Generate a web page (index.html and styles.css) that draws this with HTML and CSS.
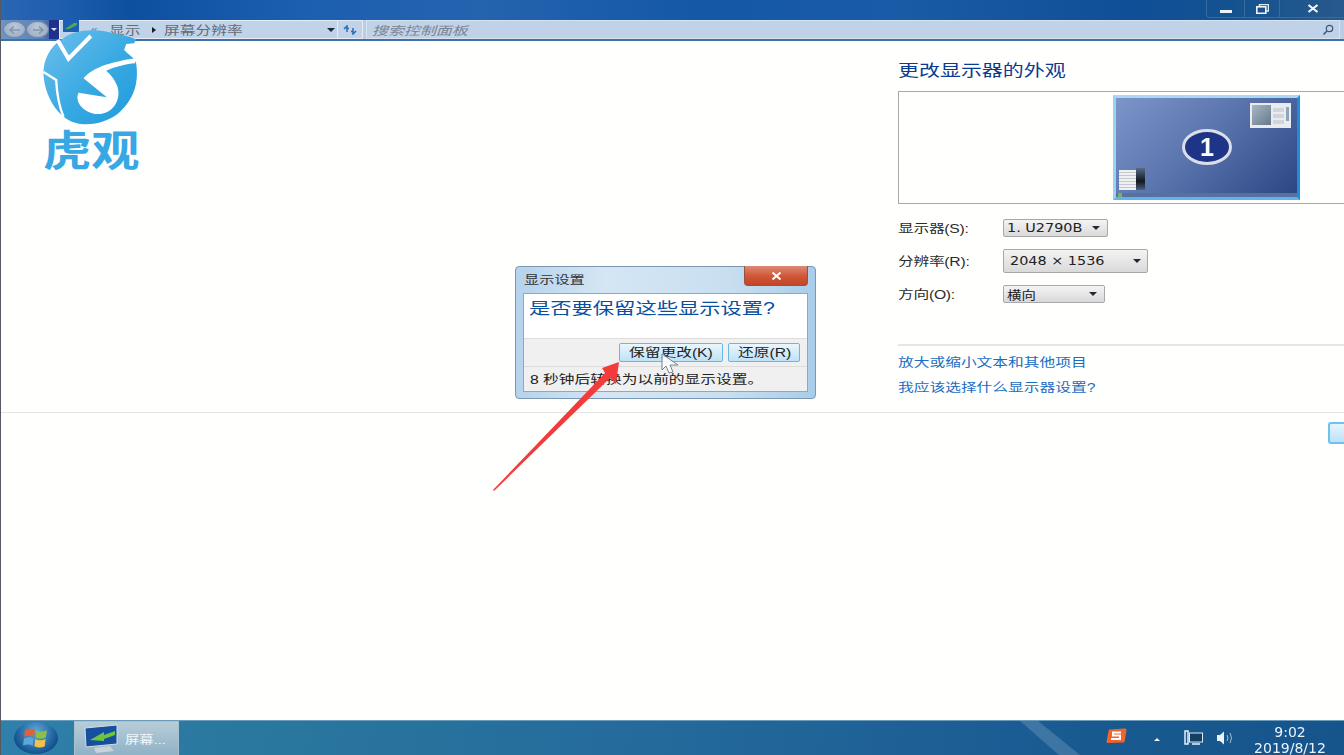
FILE: index.html
```html
<!DOCTYPE html>
<html lang="zh-CN">
<head>
<meta charset="utf-8">
<title>屏幕分辨率</title>
<link rel="stylesheet" href="styles.css">
</head>
<body>
<div class="screen">
  <header class="titlebar">
    <div class="caption">
      <div class="cap-btn cap-min"><span class="min-bar"></span></div>
      <div class="cap-btn cap-max"><svg width="13" height="10" viewBox="0 0 13 10"><rect x="3.5" y="0.5" width="9" height="6.5" fill="none" stroke="#dfe9f4" stroke-width="1.5"/><rect x="0.8" y="2.8" width="9" height="6.5" fill="#1d4f8c" stroke="#eef3f9" stroke-width="1.6"/></svg></div>
      <div class="cap-btn cap-close"><svg width="12" height="9" viewBox="0 0 12 9"><path d="M1.5 1 L10.5 8 M10.5 1 L1.5 8" stroke="#f2f6fa" stroke-width="2.2"/></svg></div>
    </div>
  </header>
  <nav class="addressbar">
    <div class="orbs">
      <span class="orb"><svg width="12" height="8" viewBox="0 0 12 8"><path d="M5 0.5 L1 4 L5 7.5 M1 4 H11" fill="none" stroke="#8496ab" stroke-width="1.6"/></svg></span>
      <span class="orb"><svg width="12" height="8" viewBox="0 0 12 8"><path d="M7 0.5 L11 4 L7 7.5 M11 4 H1" fill="none" stroke="#8496ab" stroke-width="1.6"/></svg></span>
      <span class="orb-drop"><i class="caret caret-white"></i></span>
    </div>
    <div class="crumbs">
      <svg class="crumb-icon" width="16" height="12" viewBox="0 0 16 12"><rect width="16" height="12" fill="#1e5fb5"/><path d="M2 9 L11 3 L14 3 L14 5 L6 9Z" fill="#49b04a"/></svg>
      <span class="crumb-more">«</span>
      <span class="crumb wide">显示</span>
      <span class="crumb-sep"></span>
      <span class="crumb wide">屏幕分辨率</span>
      <i class="caret caret-dark crumb-drop"></i>
    </div>
    <div class="refresh"><svg width="14" height="10" viewBox="0 0 14 10"><path d="M1 4 L4 1 L4 3.5 L6 3.5 M4 4 V7 M13 6 L10 9 L10 6.500 L8 6.500 M10 6 V3" fill="none" stroke="#2a6cb0" stroke-width="1.5"/></svg></div>
    <div class="search">
      <span class="search-text wide">搜索控制面板</span>
      <svg width="12" height="12" viewBox="0 0 12 12"><circle cx="7.500" cy="4.500" r="3.200" fill="none" stroke="#37597f" stroke-width="1.200"/><path d="M5 7 L1.500 10.500" stroke="#37597f" stroke-width="1.600"/></svg>
    </div>
  </nav>

  <main class="content">
    <section class="settings">
      <div class="panel">
        <h1 class="panel-title"><span class="wide">更改显示器的外观</span></h1>
        <div class="preview">
          <div class="monitor">
            <div class="thumb thumb-top">
              <i class="thumb-shot"></i>
              <i class="thumb-lines"><b></b><b></b><b></b></i>
              <i class="thumb-bar"></i>
            </div>
            <div class="thumb-left"><i class="thumb-doc"></i><i class="thumb-film"></i></div>
            <div class="mon-strip"><i class="mon-start"></i></div>
            <div class="badge"><span>1</span></div>
          </div>
        </div>
        <div class="rows">
          <div class="row row-a">
            <label class="row-label"><span class="wide">显示器(S):</span></label>
            <div class="select sel-s"><span class="wide sel-text">1. U2790B</span><i class="caret caret-dark"></i></div>
          </div>
          <div class="row row-b">
            <label class="row-label"><span class="wide">分辨率(R):</span></label>
            <div class="select sel-r"><span class="wide sel-text sel-pad">2048 × 1536</span><i class="caret caret-dark"></i></div>
          </div>
          <div class="row row-c">
            <label class="row-label"><span class="wide">方向(O):</span></label>
            <div class="select sel-o"><span class="wide sel-text">横向</span><i class="caret caret-dark"></i></div>
          </div>
        </div>
        <div class="links">
          <a class="link"><span class="wide">放大或缩小文本和其他项目</span></a>
          <a class="link"><span class="wide">我应该选择什么显示器设置?</span></a>
        </div>
      </div>
    </section>
    <div class="actions"><span class="ok-edge"></span></div>

    <svg class="logo" width="147" height="190" viewBox="0 0 440 570">
      <defs>
        <linearGradient id="logoBlue" x1="0" y1="0" x2="1" y2="1">
          <stop offset="0" stop-color="#6cc0ec"/>
          <stop offset="0.55" stop-color="#38a9e2"/>
          <stop offset="1" stop-color="#1f9bdc"/>
        </linearGradient>
      </defs>
      <path d="M185 118 C215 92 270 85 320 95 C350 100 385 108 408 118 L402 130 L378 132 L372 150 L382 160 C395 170 405 178 408 190 C415 240 408 290 360 335 C320 370 260 382 215 365 C170 345 135 290 130 225 C128 180 150 140 185 118Z" fill="url(#logoBlue)"/>
      <path d="M405 175 C340 185 280 200 250 235 L320 292 L235 278 C220 310 260 345 300 342 C345 338 365 290 350 255 C342 235 330 222 318 212 C345 200 380 192 405 190Z" fill="#fff"/>
      <path d="M172 120 L205 176 L272 108" fill="none" stroke="#fff" stroke-width="12"/>
      <path d="M130 216 L168 240 C170 280 175 315 190 350" fill="none" stroke="#fff" stroke-width="7"/>
    </svg>
    <div class="logo-text"><span>虎观</span></div>

    <div class="dialog">
      <div class="dlg-title">
        <span class="dlg-name wide">显示设置</span>
        <span class="dlg-close"><svg width="11" height="8" viewBox="0 0 11 8"><path d="M1.500 0.500 L9.500 7.500 M9.500 0.500 L1.500 7.500" stroke="#fff" stroke-width="2"/></svg></span>
      </div>
      <div class="dlg-body">
        <div class="dlg-msg"><span class="wide">是否要保留这些显示设置?</span></div>
        <div class="dlg-btns">
          <button class="btn btn-keep"><span class="wide">保留更改(K)</span></button>
          <button class="btn btn-revert"><span class="wide">还原(R)</span></button>
        </div>
        <div class="dlg-foot"><span class="wide">8 秒钟后转换为以前的显示设置。</span></div>
      </div>
    </div>

    <svg class="overlay" width="1344" height="755" viewBox="0 0 1344 755">
      <path d="M493 490 L605 373 L602 368 L619 362 L616 384 L610 378 L494 491Z" fill="#f23c3c"/>
      <path d="M662 354 L662 370 L666 366 L669 373 L673 372 L670 365 L678 365Z" fill="#fff" fill-opacity="0.85" stroke="#77808a" stroke-width="1"/>
    </svg>
  </main>

  <footer class="taskbar">
    <span class="streak"></span>
    <div class="orb-start">
      <svg width="24" height="22" viewBox="0 0 24 22">
        <path d="M2 4 C5 2 8 2 11 3.500 L10 10 C7 8.500 4 8.500 1 10Z" fill="#e2603a"/>
        <path d="M12.500 4 C15 5.500 18 5.500 22 4 L21 10.500 C18 12 15 12 11.500 10.500Z" fill="#8cbf4a"/>
        <path d="M1 11.500 C4 10 7 10 9.800 11.500 L9 18 C6 16.500 3 16.500 0 18Z" fill="#5aa6dd"/>
        <path d="M11.300 12 C14.500 13.500 17.500 13.500 20.800 12 L20 18.500 C17 20 14 20 10.500 18.500Z" fill="#f2c14a"/>
      </svg>
    </div>
    <div class="task-btn">
      <svg width="37" height="30" viewBox="0 0 37 30"><path d="M3 4 L35 1 V20 L4 23Z" fill="#164f9d" stroke="#d4dde5"/><path d="M8 16 L22 8 L22 11 L33 7 L33 11 L22 15 L22 17Z" fill="#6cc43f"/><path d="M12 24 L28 22 L32 27 L14 29Z" fill="#c9d2d6"/></svg>
      <span class="task-label wide">屏幕...</span>
    </div>
    <div class="tray">
      <svg class="tray-s" width="21" height="16" viewBox="0 0 21 16"><path d="M3.500 1.500 Q2.500 1.500 2.500 3 L0.500 13.500 Q0.500 15 2 15 L17 14.500 Q18.500 14.500 18.800 13 L20.500 2 Q20.500 0.500 19 0.500Z" fill="#f2642a"/><path d="M15 4.500 H7 V7.500 H14 V11 H5" fill="none" stroke="#fff" stroke-width="2"/></svg>
      <span class="tray-up"></span>
      <svg class="tray-net" width="19" height="16" viewBox="0 0 19 16"><rect x="5.500" y="3" width="13" height="9" fill="#123f62" stroke="#dfe9f1"/><path d="M1 1 H4 V14 H1Z M8 14 H16" fill="none" stroke="#e8f0f6" stroke-width="1.500"/></svg>
      <svg class="tray-vol" width="18" height="16" viewBox="0 0 18 16"><path d="M1 5 H4 L8 1.500 V14.500 L4 11 H1Z" fill="#eef3f7"/><path d="M11 5 Q13 8 11 11 M14 3 Q17 8 14 13" fill="none" stroke="#a7bdd0"/></svg>
      <div class="clock"><div>9:02</div><div>2019/8/12</div></div>
    </div>
  </footer>
</div>
</body>
</html>
```
FILE: styles.css
```css
* { box-sizing: border-box; }
html, body { margin: 0; padding: 0; }
body { width: 1344px; height: 755px; overflow: hidden; font-family: "Liberation Sans", "Noto Sans CJK SC", sans-serif; }
.screen { position: relative; width: 1344px; height: 755px; display: flex; flex-direction: column; background: #fff; border-left: 1px solid #555a60; filter: blur(0.35px); }
.wide { display: inline-block; transform: scaleX(1.31); transform-origin: left center; white-space: nowrap; }

.titlebar { height: 20px; display: flex; justify-content: flex-end; background: linear-gradient(90deg, #2a66b2 0, #1e5eae 60px, #0d50a0 130px, #1c5fb0 300px, #2463ae 480px, #1458a6 700px, #1a5ba6 900px, #0f4f98 1130px, #14528f 1230px, #27598c 1344px); }
.caption { display: flex; height: 18px; margin-right: 0; border: 1px solid #3a6a9e; border-top: 0; border-right: 0; border-radius: 0 0 0 4px; }
.cap-btn { display: flex; align-items: center; justify-content: center; border-right: 1px solid #3a6a9e; }
.cap-min { width: 38px; }
.cap-max { width: 35px; }
.cap-close { width: 64px; border-right: 0; padding-left: 1px; }
.min-bar { width: 12px; height: 3px; margin-top: 6px; background: #eef3f9; }

.addressbar { height: 21px; display: flex; align-items: center; background: #b9cde5; border-bottom: 2px solid #3f70a8; padding-right: 4px; }
.orbs { width: 58px; height: 19px; display: flex; align-items: center; padding-left: 2px; background: linear-gradient(90deg, #6f93c3, #5d83ba 40px, #2a3f96); }
.orb { width: 23px; height: 17px; border-radius: 50%; display: flex; align-items: center; justify-content: center; background: radial-gradient(circle at 50% 35%, #bccadb, #93a7bf); border: 1px solid #6e89a8; }
.orb-drop { width: 10px; height: 19px; display: flex; align-items: center; justify-content: center; background: #20308f; }
.crumbs { width: 279px; height: 19px; position: relative; display: flex; align-items: center; background: #c1d3e9; border: 1px solid #e4ecf5; color: #5d6670; font-size: 12px; }
.crumb-icon { margin-left: 3px; margin-top: -8px; flex: none; }
.crumb-more { width: 30px; text-align: center; color: #6f7c8a; }
.crumb { width: 44px; color: #646c76; }
.crumb-sep { width: 0; height: 0; margin-right: 8px; margin-left: -1px; border-left: 4px solid #1a1a1a; border-top: 3px solid transparent; border-bottom: 3px solid transparent; }
.crumb + .crumb-sep + .crumb { width: 164px; }
.crumb-drop { position: absolute; right: 2px; top: 7px; }
.refresh { width: 25px; height: 19px; display: flex; align-items: center; justify-content: center; background: #c1d3e9; border: 1px solid #e4ecf5; border-left: 0; margin-right: 3px; }
.search { flex: 1; height: 19px; display: flex; align-items: center; justify-content: space-between; padding: 0 5px 0 5px; background: #c0d2e8; border: 1px solid #d7e3f0; }
.search-text { font-size: 12px; font-style: italic; color: #7a8491; transform: scaleX(1.33); }

.caret { display: block; width: 0; height: 0; border-left: 4px solid transparent; border-right: 4px solid transparent; border-top: 4px solid #222; flex: none; }
.caret-white { border-left-width: 3px; border-right-width: 3px; border-top: 3px solid #dfe5f5; }
.caret-dark { border-top-color: #1f2a36; }

.content { flex: 1; min-height: 0; display: flex; flex-direction: column; background: #fffffe; }
.settings { height: 372px; flex: none; border-bottom: 1px solid #e5e5e5; padding-left: 897px; }
.panel { display: flex; flex-direction: column; }
.panel-title { margin: 19px 0 0; height: 21px; font-size: 16px; line-height: 21px; font-weight: 400; color: #0b3a93; }
.preview { height: 113px; margin-top: 10px; padding: 3px 44px 0 0; display: flex; justify-content: flex-end; border: 1px solid #a9a9a9; border-right: 0; }
.monitor { position: relative; width: 187px; height: 105px; border: 3px solid #5fb4ec; border-top-color: #a8d8f6; border-left-color: #9ad2f4; border-right-color: #1a8fdc; background: linear-gradient(135deg, #7d95c9, #5b75ae 45%, #2b4584); }
.thumb { position: absolute; }
.thumb-top { top: 5px; right: 6px; width: 41px; height: 25px; display: flex; gap: 2px; background: #e9ebee; padding: 2px; }
.thumb-shot { width: 19px; height: 20px; background: linear-gradient(135deg, #a8b9c4, #65798c); }
.thumb-lines { flex: 1; display: flex; flex-direction: column; gap: 2px; padding-top: 3px; }
.thumb-lines b { height: 4px; background: #cfd5da; }
.thumb-bar { width: 3px; height: 14px; margin-top: 2px; background: #8ea4b9; }
.thumb-left { position: absolute; left: 3px; bottom: 7px; display: flex; }
.thumb-doc { width: 17px; height: 20px; background: repeating-linear-gradient(#eef0f1 0 2px, #c3c8cc 2px 3px); }
.thumb-film { width: 9px; height: 22px; margin-top: -2px; background: linear-gradient(#566a86, #111820 60%, #4c5f7c); }
.mon-strip { position: absolute; left: 0; right: 0; bottom: 0; height: 4px; background: #56709f; }
.mon-start { display: block; width: 4px; height: 4px; margin-left: 2px; background: #7cae5e; }
.badge { position: absolute; left: 66px; top: 31px; width: 50px; height: 36px; border: 3px solid #d9dee8; border-radius: 50%; background: #1d3487; display: flex; align-items: center; justify-content: center; color: #fff; font-size: 25px; font-weight: 700; font-family: "Liberation Sans", sans-serif; }

.rows { margin-top: 15px; display: flex; flex-direction: column; }
.row { display: flex; align-items: center; }
.row-label { width: 105px; padding-bottom: 2px; font-size: 12px; color: #2b2b2b; letter-spacing: -0.2px; }
.row-a { height: 18px; }
.row-b { height: 24px; margin-top: 12px; }
.row-c { height: 18px; margin-top: 12px; }
.select { height: 100%; display: flex; align-items: center; justify-content: space-between; padding: 0 7px 0 3px; border: 1px solid #a8a8a8; border-radius: 2px; background: linear-gradient(#f4f4f4, #d9d9d9); font-size: 12px; color: #222; }
.sel-text { font-family: "DejaVu Sans", "Noto Sans CJK SC", sans-serif; font-size: 12px; transform: scaleX(1.2); }
.sel-pad { margin-left: 2px; }
.sel-s { width: 105px; }
.sel-r { width: 145px; padding-left: 4px; padding-right: 6px; }
.sel-o { width: 102px; padding-right: 7px; }

.links { margin-top: 41px; padding-top: 9px; border-top: 2px solid #e6e6e6; display: flex; flex-direction: column; gap: 9px; }
.link { height: 16px; font-size: 12px; line-height: 16px; color: #1a6dc0; }

.actions { flex: 1; padding-top: 9px; display: flex; justify-content: flex-end; }
.ok-edge { width: 16px; height: 22px; border: 2px solid #6ec2ef; border-right: 0; border-radius: 3px 0 0 3px; background: linear-gradient(#e6f4fc, #bfe1f6); }

.logo { position: absolute; left: -1px; top: 0; }
.logo-text { position: absolute; left: 42px; top: 123px; font-size: 42px; line-height: 50px; font-weight: 700; color: #37a8e4; font-family: "Noto Sans CJK SC", sans-serif; }
.logo-text span { display: inline-block; transform: scaleX(1.15); transform-origin: left center; }

.dialog { position: absolute; left: 514px; top: 266px; width: 301px; height: 133px; padding: 0 7px; display: flex; flex-direction: column; border: 1px solid #7c97b2; border-radius: 4px; background: linear-gradient(90deg, #b5d3ec, #d4e6f4 30%, #c9dff0 70%, #a9cdea); }
.dlg-title { height: 26px; flex: none; position: relative; }
.dlg-name { position: absolute; left: 1px; top: 5px; font-size: 11.600px; line-height: 16px; color: #333; }
.dlg-close { position: absolute; right: 0; top: -1px; width: 64px; height: 20px; display: flex; align-items: center; justify-content: center; border-radius: 0 0 4px 4px; background: linear-gradient(#dd8a78, #cf5636 55%, #c24526); border: 1px solid #96513f; border-top: 0; }
.dlg-body { height: 99px; display: flex; flex-direction: column; background: #f0f0f0; border: 1px solid #8fa8bf; }
.dlg-msg { height: 44px; flex: none; padding: 4px 0 0 5px; background: #fff; font-size: 16px; line-height: 22px; color: #0a4f9e; }
.dlg-msg .wide { transform: scaleX(1.33); }
.dlg-btns { height: 29px; flex: none; display: flex; align-items: center; justify-content: flex-end; gap: 5px; padding: 0 7px 0 0; border-top: 1px solid #dedede; border-bottom: 1px solid #dcdcdc; }
.btn { height: 19px; padding: 0; border: 1px solid #6cb6e2; border-radius: 2px; background: linear-gradient(#eaf6fd, #bfe2f6); font: 12px/16px "Liberation Sans", "Noto Sans CJK SC", sans-serif; color: #222; text-align: left; }
.btn-keep { width: 104px; padding-left: 9px; }
.btn-revert { width: 72px; padding-left: 9px; }
.dlg-foot { height: 24px; flex: none; padding-left: 6px; font-size: 12px; line-height: 26px; color: #222; }

.overlay { position: absolute; left: -1px; top: 0; pointer-events: none; }

.taskbar { position: relative; height: 35px; flex: none; display: flex; align-items: stretch; background: linear-gradient(100deg, #2f80ab 0, #2a789f 230px, #256c9c 600px, #1c5c94 1000px, #185a90 1075px, #16548c 1344px); border-top: 1px solid #6b9cbc; }
.streak { position: absolute; left: 1019px; top: 0; width: 60px; height: 34px; clip-path: polygon(0 0, 30% 0, 100% 100%, 65% 100%); background: rgba(255, 255, 255, 0.16); }
.orb-start { width: 73px; display: flex; align-items: center; justify-content: center; padding-right: 4px; }
.orb-start svg { padding: 4px 6px; border-radius: 50%; width: 44px; height: 32px; background: radial-gradient(circle at 50% 30%, #5fa8d8, #0f4f8c 75%, #0a3a6a); }
.task-btn { width: 105px; display: flex; align-items: center; gap: 6px; padding-left: 7px; background: linear-gradient(#b7cdd8, #8fb2c6); color: #f2f6f9; border: 1px solid #a9c0cd; border-bottom: 0; font-size: 11.500px; }
.task-label { transform: scaleX(1.25); }
.tray { position: relative; margin-left: auto; display: flex; align-items: center; color: #eef3f8; }
.tray-s { margin: -4px 0 0 0; }
.tray-up { width: 0; height: 0; margin: 2px 0 0 27px; border-left: 3px solid transparent; border-right: 3px solid transparent; border-bottom: 3px solid #eef3f8; }
.tray-net { margin-left: 24px; }
.tray-vol { margin-left: 13px; }
.clock { width: 78px; margin: 4px 15px 0 17px; text-align: center; font-family: "DejaVu Sans", sans-serif; font-size: 14px; line-height: 16px; }
```
